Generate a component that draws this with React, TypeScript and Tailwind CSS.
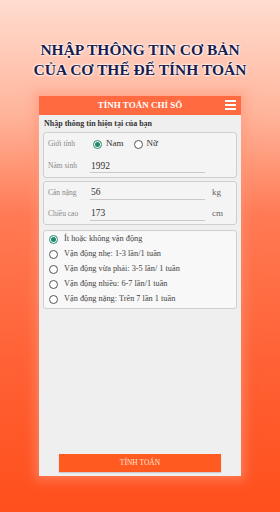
import React from "react";

const serif = { fontFamily: '"Liberation Serif", "DejaVu Serif", serif' };

function Radio({ checked }: { checked?: boolean }) {
  return (
    <span
      className={`flex h-[9px] w-[9px] shrink-0 items-center justify-center rounded-full border ${
        checked ? "border-[#1f8a6e]" : "border-[#555]"
      } bg-white`}
    >
      {checked && <span className="h-[5px] w-[5px] rounded-full bg-[#1f8a6e]" />}
    </span>
  );
}

function Field({ label, value, unit }: { label: string; value: string; unit?: string }) {
  return (
    <div className="flex h-[22px] items-center">
      <span className="w-[42px] text-[7.5px] text-[#888]">{label}</span>
      <div className="flex h-[14px] w-[115px] items-end border-b border-[#c8c8c8] pb-[1px] pl-[1px] text-[9.5px] leading-none text-[#333]">
        {value}
      </div>
      {unit && <span className="ml-[7px] text-[9px] text-[#666]">{unit}</span>}
    </div>
  );
}

export default function App() {
  const options = [
    "Ít hoặc không vận động",
    "Vận động nhẹ: 1-3 lần/1 tuần",
    "Vận động vừa phải: 3-5 lần/ 1 tuần",
    "Vận động nhiều: 6-7 lần/1 tuần",
    "Vận động nặng: Trên 7 lần 1 tuần",
  ];
  return (
    <div
      className="flex h-[512px] w-[280px] flex-col items-center overflow-hidden bg-[linear-gradient(180deg,#ffdccf_0%,#ffb59c_22%,#ff7a54_42%,#ff6236_70%,#ff4f1c_100%)]"
      style={serif}
    >
      <div className="mt-[40px] flex flex-col items-center text-[15.5px] font-bold leading-[20px] text-[#1c1c4c] [text-shadow:0_0_2px_#fff,0_0_2px_#fff,0_0_3px_#fff]">
        <div>NHẬP THÔNG TIN CƠ BẢN</div>
        <div>CỦA CƠ THỂ ĐỂ TÍNH TOÁN</div>
      </div>

      <div className="mt-[16px] flex h-[380px] w-[202px] flex-col bg-[#efefef] shadow-[0_0_10px_4px_rgba(255,150,120,0.6)]">
        <div className="relative flex h-[19px] items-center justify-center bg-[#ff6a40]">
          <span className="text-[9px] font-bold text-white">TÍNH TOÁN CHỈ SỐ</span>
          <div className="absolute right-[5px] top-[4px] flex flex-col gap-[2px]">
            <span className="block h-[2px] w-[11px] bg-white" />
            <span className="block h-[2px] w-[11px] bg-white" />
            <span className="block h-[2px] w-[11px] bg-white" />
          </div>
        </div>

        <div className="ml-[5px] mt-[3px] text-[8px] font-bold leading-[12px] text-[#333]">
          Nhập thông tin hiện tại của bạn
        </div>

        <div className="mx-[4px] mt-[2px] flex h-[46px] flex-col rounded-[3px] border border-[#cfcfcf] bg-[#f4f4f4] px-[4px]">
          <div className="flex h-[22px] items-center">
            <span className="w-[45px] text-[7.5px] text-[#888]">Giới tính</span>
            <Radio checked />
            <span className="ml-[4px] text-[9px] text-[#333]">Nam</span>
            <span className="ml-[10px]">
              <Radio />
            </span>
            <span className="ml-[4px] text-[9px] text-[#333]">Nữ</span>
          </div>
          <Field label="Năm sinh" value="1992" />
        </div>

        <div className="mx-[4px] mt-[3px] flex h-[44px] flex-col rounded-[3px] border border-[#cfcfcf] bg-[#f4f4f4] px-[4px]">
          <Field label="Cân nặng" value="56" unit="kg" />
          <Field label="Chiều cao" value="173" unit="cm" />
        </div>

        <div className="mx-[4px] mt-[5px] flex flex-col rounded-[3px] border border-[#cfcfcf] bg-[#f8f8f8] px-[5px] py-[1px]">
          {options.map((o, i) => (
            <div key={o} className="flex h-[15px] items-center gap-[6px]">
              <Radio checked={i === 0} />
              <span className="text-[8.3px] text-[#444]">{o}</span>
            </div>
          ))}
        </div>

        <div className="flex-1" />
        <div className="mb-[4px] ml-[20px] flex h-[18px] w-[162px] items-center justify-center bg-[#ff5a1f] shadow-[0_1px_1px_rgba(0,0,0,0.15)]">
          <span className="text-[7.5px] text-[#ffe6da]">TÍNH TOÁN</span>
        </div>
      </div>
    </div>
  );
}
